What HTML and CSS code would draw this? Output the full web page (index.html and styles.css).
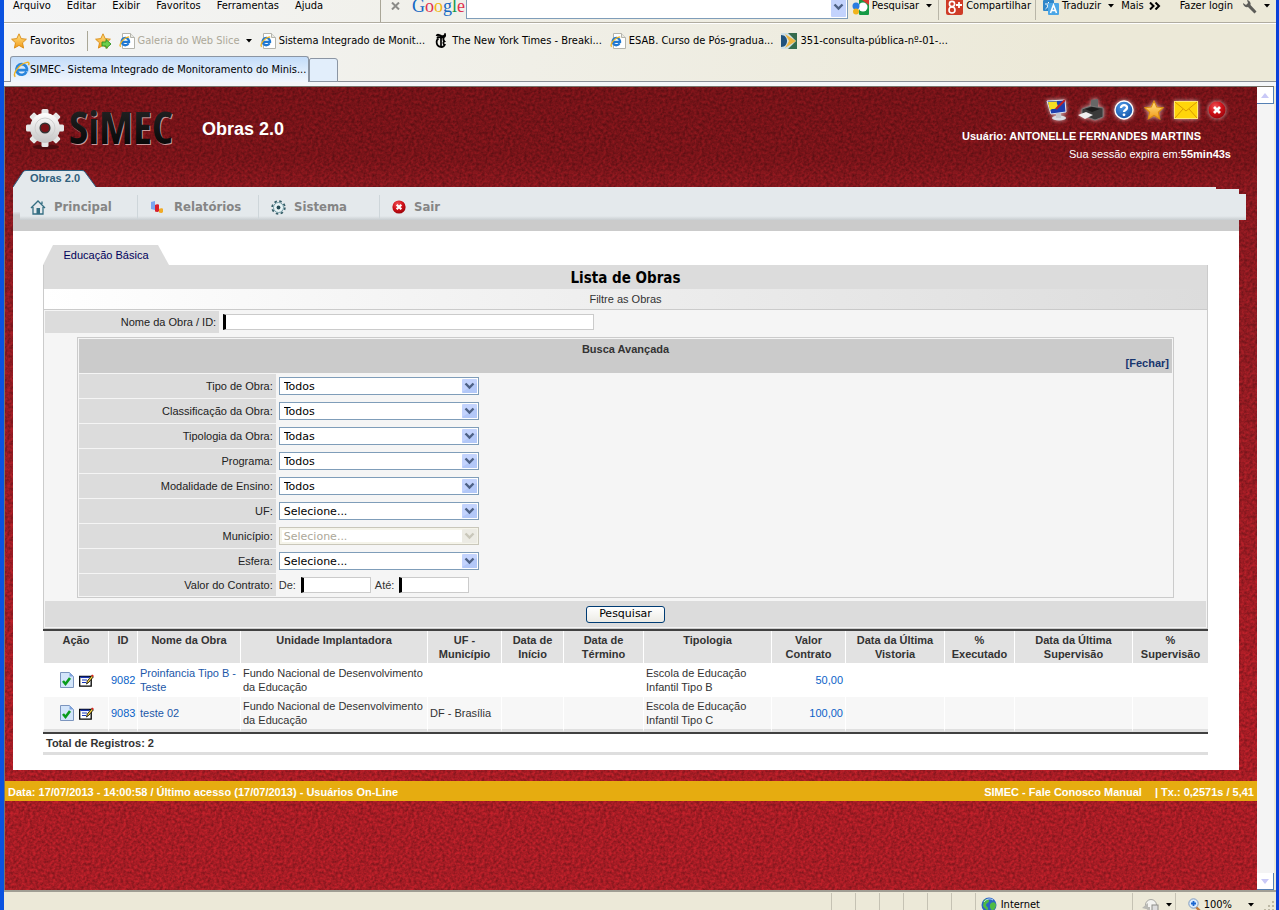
FILE: index.html
```html
<!DOCTYPE html>
<html lang="pt-BR">
<head>
<meta charset="utf-8">
<title>SIMEC - Lista de Obras</title>
<link rel="stylesheet" href="styles.css">
</head>
<body>
<svg class="defs" aria-hidden="true">
  <defs>
    <linearGradient id="gold" x1="0" y1="0" x2="0" y2="1"><stop offset="0" stop-color="#ffe48a"/><stop offset="1" stop-color="#f39a16"/></linearGradient>
    <linearGradient id="metal" x1="0" y1="0" x2="0" y2="1"><stop offset="0" stop-color="#fff"/><stop offset="1" stop-color="#c4c4c4"/></linearGradient>
    <linearGradient id="ink" x1="0" y1="0" x2="0" y2="1"><stop offset="0" stop-color="#2a2a2a"/><stop offset="1" stop-color="#000"/></linearGradient>
    <radialGradient id="redball" cx=".4" cy=".3" r=".8"><stop offset="0" stop-color="#f2545a"/><stop offset=".5" stop-color="#cf1118"/><stop offset="1" stop-color="#8c0007"/></radialGradient>
    <radialGradient id="blueball" cx=".4" cy=".3" r=".8"><stop offset="0" stop-color="#4f9be8"/><stop offset="1" stop-color="#0d4ba0"/></radialGradient>
    <symbol id="star" viewBox="0 0 16 16"><path d="M8 .8l2.2 4.8 5.2.6-3.9 3.6 1.1 5.3L8 12.4l-4.6 2.7 1.1-5.3L.6 6.2l5.2-.6z" fill="url(#gold)" stroke="#d98a12" stroke-width=".9"/></symbol>
    <symbol id="ie" viewBox="0 0 16 16"><path d="M12.6 10.3a5 5 0 1 1 .5-3.200v1.500H4.600" fill="none" stroke="#2a86dd" stroke-width="2.500"/><path d="M2.200 14.800C-.6 12.500 5 3 13.200 1.300c2-.3 2.200 1 1.400 2.700" fill="none" stroke="#f0b323" stroke-width="1.400"/></symbol>
    <symbol id="page" viewBox="0 0 16 16"><path d="M3.500 .5h8l4 4v11h-12z" fill="#fff" stroke="#b4b4ac"/><path d="M11.500 .5v4h4" fill="#e8e8e2" stroke="#b4b4ac"/><path d="M9.600 10.300a3.700 3.700 0 1 1 .4-2.400v1H3.800" fill="none" stroke="#1f78d2" stroke-width="2.300"/><path d="M1.700 13.800C-.5 12 4 4.500 10.200 3.800" fill="none" stroke="#f0b323" stroke-width="1.300"/></symbol>
    <symbol id="caret" viewBox="0 0 6 4"><path d="M0 0h6L3 3.500z" fill="#000"/></symbol>
    <symbol id="chev" viewBox="0 0 15 14"><rect width="15" height="14" rx="1" fill="#c3d3fd"/><path d="M0 13l15-9v10H1z" fill="#b3c8f8"/><path d="M3.500 4.500l4 4 4-4" fill="none" stroke="#4d6185" stroke-width="2.400"/></symbol>
    <symbol id="chev-off" viewBox="0 0 15 14"><rect width="15" height="14" rx="1" fill="#ecebe4"/><path d="M3.500 4.500l4 4 4-4" fill="none" stroke="#c9c7ba" stroke-width="2.400"/></symbol>
    <symbol id="close" viewBox="0 0 18 18"><circle cx="9" cy="9" r="8.500" fill="url(#redball)"/><path d="M6 6l6 6M12 6l-6 6" stroke="#fff" stroke-width="2.800"/></symbol>
    <symbol id="doc-ok" viewBox="0 0 14 16"><path d="M.5 .5h9l4 4v11H.5z" fill="#d3e5fa" stroke="#7c95be"/><path d="M9.500 .5v4h4z" fill="#7fa4dd"/><path d="M3 9l2.500 3L10 6" fill="none" stroke="#0a9c1b" stroke-width="2.600"/></symbol>
    <symbol id="edit" viewBox="0 0 15 13"><path d="M.7 2.500h11.500v9.700H.7z" fill="#fff" stroke="#000" stroke-width="1.300"/><path d="M1.400 3.300h9" stroke="#1836b8" stroke-width="1.500"/><path d="M3 6h5M3 8.500h4" stroke="#1836b8"/><path d="M7.500 10l.8-3 4.500-5.500 1.600 1.300-4.500 5.400z" fill="#f5d142" stroke="#000" stroke-width=".8"/><path d="M12.300 1.800l1-1.300 1.500 1.200-.9 1.200z" fill="#e02020"/></symbol>
  </defs>
</svg>

<div class="window">
  <header class="toolbar">
    <nav class="menu">
      <button>Arquivo</button><button>Editar</button><button>Exibir</button><button>Favoritos</button><button>Ferramentas</button><button>Ajuda</button>
    </nav>
    <button class="bar-close" aria-label="Fechar barra"><svg width="9" height="8" viewBox="0 0 9 8"><path d="M1 .5l7 7M8 .5l-7 7" stroke="#8b8b88" stroke-width="2"/></svg></button>
    <span class="google"><i class="b">G</i><i class="r">o</i><i class="y">o</i><i class="b">g</i><i class="g">l</i><i class="r">e</i></span>
    <div class="search"><input type="text" aria-label="Pesquisa Google"><svg width="15" height="22" viewBox="0 0 15 22"><rect width="15" height="22" rx="1" fill="#c3d3fd"/><path d="M3.500 9.500l4 4 4-4" fill="none" stroke="#4d6185" stroke-width="2.400"/></svg></div>
    <button class="tool t-search"><svg width="17" height="17" viewBox="0 0 17 17"><rect x="7" width="10" height="17" rx="1" fill="#169a45"/><path d="M7 0h10v7z" fill="#d93a2f"/><circle cx="11" cy="9" r="4.500" fill="#fff"/><circle cx="4" cy="8" r="3.500" fill="#2a7de0"/><circle cx="4" cy="13.500" r="3" fill="#f0b41c"/></svg>Pesquisar<svg class="caret"><use href="#caret"/></svg></button>
    <button class="tool t-share"><svg width="17" height="17" viewBox="0 0 17 17"><rect width="17" height="17" rx="2" fill="#cf3b27"/><circle cx="6" cy="6" r="2.600" fill="none" stroke="#fff" stroke-width="1.600"/><circle cx="6" cy="12" r="3" fill="none" stroke="#fff" stroke-width="1.600"/><path d="M10 7h6M13 4v6" stroke="#fff" stroke-width="1.800"/></svg>Compartilhar</button>
    <button class="tool t-trans"><svg width="16" height="17" viewBox="0 0 16 17"><rect width="11" height="11" y="2" rx="1" fill="#2f86c9"/><path d="M2 6h7M5.500 4v2c0 2-1.500 4-3 5M4 7c1 2 2.500 3 4 4" stroke="#fff" fill="none"/><rect x="5" y="5" width="11" height="12" rx="1" fill="#4ba6e6"/><path d="M7.500 15l3-8 3 8M8.500 12.500h4" fill="none" stroke="#fff" stroke-width="1.600"/></svg>Traduzir<svg class="caret"><use href="#caret"/></svg></button>
    <button class="tool t-more">Mais<svg width="12" height="8" viewBox="0 0 12 8"><path d="M1 .5L4.500 4 1 7.500M6.500 .5L10 4 6.500 7.500" fill="none" stroke="#000" stroke-width="2"/></svg></button>
    <button class="tool t-login">Fazer login</button>
    <button class="tool t-wrench" aria-label="Opções"><svg width="15" height="15" viewBox="0 0 15 15"><path d="M1 4a4 4 0 0 0 5 4l6.500 6.500 2-2L8.500 6a4 4 0 0 0-3.500-5l1 3-2 2z" fill="#5c5c58"/></svg><svg class="caret"><use href="#caret"/></svg></button>
  </header>

  <nav class="favorites">
    <button class="fav fav-main"><svg width="16" height="16"><use href="#star"/></svg>Favoritos</button>
    <button class="fav fav-add" aria-label="Adicionar a favoritos"><svg width="16" height="16" viewBox="0 0 16 16"><use href="#star"/><path d="M7 9h4V6.500l5 4.500-5 4.500V13H7z" fill="#6ccf4c" stroke="#2f8f23" stroke-width=".9"/></svg></button>
    <a class="fav fav-off" href="#"><svg width="16" height="16"><use href="#page"/></svg>Galeria do Web Slice<svg class="caret"><use href="#caret"/></svg></a>
    <a class="fav" href="#"><svg width="16" height="16"><use href="#page"/></svg>Sistema Integrado de Monit...</a>
    <a class="fav fav-nyt" href="#"><svg width="16" height="16" viewBox="0 0 16 16"><path d="M3.500 3c1-2.500 3-.5 5 0s3 0 3.500-1.500c.8 3-2 3.500-4.500 3-2-.5-3-.5-3.200.8" fill="none" stroke="#000" stroke-width="1.800"/><path d="M5.500 5.500c-3 2-2.500 7.500 2 8.500 2.500.3 4-1 4.700-3M8 5v8.500M11 5c-1 1-1 2 .5 3.500-1.500.5-1.500 1.500-.5 3" fill="none" stroke="#000" stroke-width="1.700"/></svg>The New York Times - Breaki...</a>
    <a class="fav" href="#"><svg width="16" height="16"><use href="#page"/></svg>ESAB. Curso de Pós-gradua...</a>
    <a class="fav" href="#"><svg width="16" height="16" viewBox="0 0 16 16"><rect width="16" height="16" fill="#356b4d"/><path d="M0 0h7l8 8-8 8H0z" fill="#cfe0e6"/><path d="M0 2c8 0 8 12 0 12z" fill="#20527c"/><path d="M4 1l11 7-11 7 4-7z" fill="#edb541"/></svg>351-consulta-pública-nº-01-...</a>
  </nav>

  <div class="tabs">
    <button class="tab"><svg width="17" height="17"><use href="#ie"/></svg>SIMEC- Sistema Integrado de Monitoramento do Minis...</button>
    <button class="tab-new" aria-label="Nova guia"></button>
  </div>

  <div class="viewport">
    <main class="site">
      <div class="masthead">
        <svg class="logo" width="152" height="46" viewBox="0 0 152 46" role="img" aria-label="SiMEC">
          <ellipse cx="21" cy="39" rx="13" ry="2.500" fill="#4c0b0f"/>
          <g fill="#e6e6e6">
            <rect x="16.500" y="1" width="7" height="38" rx="1.500"/>
            <rect x="16.500" y="1" width="7" height="38" rx="1.500" transform="rotate(45 20 20)"/>
            <rect x="16.500" y="1" width="7" height="38" rx="1.500" transform="rotate(90 20 20)"/>
            <rect x="16.500" y="1" width="7" height="38" rx="1.500" transform="rotate(135 20 20)"/>
          </g>
          <circle cx="20" cy="20" r="15" fill="url(#metal)"/>
          <circle cx="20" cy="20" r="10" fill="none" stroke="#cfcfcf"/>
          <circle cx="20" cy="20" r="4.800" fill="#7a1218" stroke="#333" stroke-width="1.500"/>
          <text class="logo-low" x="45" y="37">SiMEC</text>
          <text class="logo-top" x="44" y="36">SiMEC</text>
        </svg>
        <h1>Obras 2.0</h1>
        <div class="user">
          <div class="quick">
            <button aria-label="Tela"><svg width="22" height="22" viewBox="0 0 22 22"><path d="M1 2l18-1 1 12-15 2z" fill="#1d3fae" stroke="#dce4f4"/><path d="M2 3l9-.5c-1 3 2 3 0 6-3 3-5 0-7 3z" fill="#f6df20"/><path d="M10 10l9-9" stroke="#c32020" stroke-width="2"/><ellipse cx="13" cy="19" rx="7" ry="2.500" fill="#d9dce2"/><path d="M10 14h5v5h-5z" fill="#c5c8cf"/></svg></button>
            <button aria-label="Imprimir"><svg width="26" height="22" viewBox="0 0 26 22"><path d="M13 2q0-1 1-1.300L19 0q1 0 1 1v9h-7z" fill="#676767"/><path d="M4 10l9-3 12 2v9l-8 3-13-5z" fill="#3a3a3a" stroke="#777"/><path d="M7 10l7-2 8 2-8 3z" fill="#1c1c1c"/><path d="M0 16l8-3 7 3-8 4z" fill="#f0f0f0"/></svg></button>
            <button aria-label="Ajuda"><svg width="20" height="20" viewBox="0 0 20 20"><circle cx="10" cy="10" r="9" fill="url(#blueball)" stroke="#fff" stroke-width="1.400"/><path d="M7 8c0-4 6.500-3.500 6 0-.3 2-3 2-3 4" fill="none" stroke="#fff" stroke-width="2.300"/><circle cx="10" cy="14.800" r="1.400" fill="#fff"/></svg></button>
            <button aria-label="Favorito"><svg width="20" height="20"><use href="#star"/></svg></button>
            <button aria-label="Mensagens"><svg width="24" height="18" viewBox="0 0 24 18"><rect x=".5" y=".5" width="23" height="17" fill="#ffd50a" stroke="#ffea70"/><path d="M1 1l11 9L23 1M1 17l8-9M23 17l-8-9" fill="none" stroke="#d99a00"/></svg></button>
            <button aria-label="Sair do sistema"><svg width="18" height="18"><use href="#close"/></svg></button>
          </div>
          <p class="who">Usuário: ANTONELLE FERNANDES MARTINS</p>
          <p class="session">Sua sessão expira em:<b>55min43s</b></p>
        </div>
      </div>

      <div class="sheet">
        <a class="module-tab" href="#"><svg viewBox="0 0 84 17" preserveAspectRatio="none"><path d="M0 17L10 2q1-1.500 3-1.500h56q2 0 3 1.500l11 15" fill="#e4e9ec" stroke="#2b5f80"/></svg><span>Obras 2.0</span></a>
        <nav class="mainmenu">
          <a href="#"><svg width="16" height="15" viewBox="0 0 16 15"><path d="M1 8l7-7 7 7M3 7v7h10V7M12 4V1.500" fill="none" stroke="#346e82" stroke-width="1.300"/><rect x="6.500" y="8" width="3.500" height="6" fill="#346e82"/></svg>Principal</a>
          <a href="#"><svg width="16" height="13" viewBox="0 0 16 13"><path d="M1 1l4-1v9l-4-1z" fill="#7ba5ee"/><path d="M5 4c1-1 4-1 4 0v6c-1 1.500-4 1-4 0z" fill="#d81f2a"/><path d="M9 8c1-1 4-1 4 0v3c-1 1.500-4 1-4 0z" fill="#f0ab25"/></svg>Relatórios</a>
          <a href="#"><svg width="15" height="15" viewBox="0 0 15 15"><circle cx="7.500" cy="7.500" r="6.300" fill="none" stroke="#38606a" stroke-width="1.800" stroke-dasharray="2.500 2.450"/><circle cx="7.500" cy="7.500" r="5" fill="#e8f3f5" stroke="#729ba5"/><circle cx="7.500" cy="7.500" r="1.900" fill="#244c56"/></svg>Sistema</a>
          <a href="#"><svg width="14" height="14"><use href="#close"/></svg>Sair</a>
        </nav>
        <div class="graybar"></div>

        <div class="content">
          <a class="page-tab" href="#">Educação Básica</a>
          <form class="filters">
            <h2>Lista de Obras</h2>
            <p class="subtitle">Filtre as Obras</p>
            <div class="name-row">
              <label for="nome">Nome da Obra / ID:</label>
              <div><input id="nome" class="field wide" type="text"></div>
            </div>
            <div class="advanced">
              <div class="adv-head"><strong>Busca Avançada</strong><a href="#">[Fechar]</a></div>
              <div class="row"><label for="tipo">Tipo de Obra:</label><div><span class="pick"><select id="tipo"><option>Todos</option></select><svg><use href="#chev"/></svg></span></div></div>
              <div class="row"><label for="classe">Classificação da Obra:</label><div><span class="pick"><select id="classe"><option>Todos</option></select><svg><use href="#chev"/></svg></span></div></div>
              <div class="row"><label for="tipologia">Tipologia da Obra:</label><div><span class="pick"><select id="tipologia"><option>Todas</option></select><svg><use href="#chev"/></svg></span></div></div>
              <div class="row"><label for="programa">Programa:</label><div><span class="pick"><select id="programa"><option>Todos</option></select><svg><use href="#chev"/></svg></span></div></div>
              <div class="row"><label for="modalidade">Modalidade de Ensino:</label><div><span class="pick"><select id="modalidade"><option>Todos</option></select><svg><use href="#chev"/></svg></span></div></div>
              <div class="row"><label for="uf">UF:</label><div><span class="pick"><select id="uf"><option>Selecione...</option></select><svg><use href="#chev"/></svg></span></div></div>
              <div class="row"><label for="municipio">Município:</label><div><span class="pick"><select id="municipio" disabled><option>Selecione...</option></select><svg><use href="#chev-off"/></svg></span></div></div>
              <div class="row"><label for="esfera">Esfera:</label><div><span class="pick"><select id="esfera"><option>Selecione...</option></select><svg><use href="#chev"/></svg></span></div></div>
              <div class="row last"><span class="label">Valor do Contrato:</span><div><label for="de">De:</label><input id="de" class="field short" type="text"><label for="ate">Até:</label><input id="ate" class="field short" type="text"></div></div>
            </div>
            <div class="actions"><button type="button" class="go">Pesquisar</button></div>
          </form>

          <table class="works">
            <colgroup><col class="c-act"><col class="c-id"><col class="c-name"><col class="c-unit"><col class="c-uf"><col class="c-start"><col class="c-end"><col class="c-type"><col class="c-val"><col class="c-visit"><col class="c-exec"><col class="c-sup"><col class="c-psup"></colgroup>
            <thead><tr><th>Ação</th><th>ID</th><th>Nome da Obra</th><th>Unidade Implantadora</th><th>UF -<br>Município</th><th>Data de<br>Início</th><th>Data de<br>Término</th><th>Tipologia</th><th>Valor<br>Contrato</th><th>Data da Última<br>Vistoria</th><th>%<br>Executado</th><th>Data da Última<br>Supervisão</th><th>%<br>Supervisão</th></tr></thead>
            <tbody>
              <tr><td class="acts"><button aria-label="Selecionar 9082"><svg width="14" height="16"><use href="#doc-ok"/></svg></button><button aria-label="Editar 9082"><svg width="15" height="13"><use href="#edit"/></svg></button></td><td class="num">9082</td><td><a href="#">Proinfancia Tipo B - Teste</a></td><td>Fundo Nacional de Desenvolvimento da Educação</td><td></td><td></td><td></td><td>Escola de Educação<br>Infantil Tipo B</td><td class="num">50,00</td><td></td><td></td><td></td><td></td></tr>
              <tr><td class="acts"><button aria-label="Selecionar 9083"><svg width="14" height="16"><use href="#doc-ok"/></svg></button><button aria-label="Editar 9083"><svg width="15" height="13"><use href="#edit"/></svg></button></td><td class="num">9083</td><td><a href="#">teste 02</a></td><td>Fundo Nacional de Desenvolvimento da Educação</td><td>DF - Brasília</td><td></td><td></td><td>Escola de Educação<br>Infantil Tipo C</td><td class="num">100,00</td><td></td><td></td><td></td><td></td></tr>
            </tbody>
          </table>
          <p class="total">Total de Registros: 2</p>
        </div>
      </div>

      <footer class="sitefoot"><span>Data: 17/07/2013 - 14:00:58 / Último acesso (17/07/2013) - Usuários On-Line</span><span class="contact">SIMEC - Fale Conosco Manual</span><span>| Tx.: 0,2571s / 5,41</span></footer>
    </main>
    <div class="scroll">
      <button aria-label="Rolar para cima"><svg width="8" height="5" viewBox="0 0 8 5"><path d="M0 5h8L4 0z" fill="#c9c9f7"/></svg></button>
      <button aria-label="Rolar para baixo"><svg width="8" height="5" viewBox="0 0 8 5"><path d="M0 0h8L4 5z" fill="#c9c9f7"/></svg></button>
    </div>
  </div>

  <div class="status">
    <span class="slot"></span><span class="slot"></span><span class="slot"></span><span class="slot"></span><span class="slot"></span><span class="slot"></span>
    <span class="zone"><svg width="16" height="16" viewBox="0 0 16 16"><circle cx="8" cy="8" r="7.500" fill="#2c66c4"/><path d="M3 3c3-2 5-1 5 1S5 6 5 8s2 1 2 4-4-1-5-3zM10 6c3-2 5 0 5 2s-2 6-4 5-3-5-1-7z" fill="#4fbb45"/><path d="M3 5c2-3 6-4 9-2" stroke="#bcdcff" fill="none"/></svg>Internet</span>
    <button class="guard" aria-label="Segurança"><svg width="17" height="15" viewBox="0 0 17 15"><circle cx="9" cy="7" r="5.500" fill="#f3f3f0" stroke="#a8a8a2"/><path d="M0 10l6-5v4h2v3z" fill="#b9b9b4"/><rect x="10" y="7" width="6" height="6" fill="#ddd" stroke="#8d8d88"/></svg><svg class="caret"><use href="#caret"/></svg></button>
    <button class="zoom"><svg width="13" height="14" viewBox="0 0 13 14"><path d="M8 9l4 4" stroke="#c47b3a" stroke-width="2.400"/><circle cx="5.500" cy="5.500" r="4.700" fill="#dcebfb" stroke="#7f9cc0"/><path d="M3 5.500h5M5.500 3v5" stroke="#1a66d0" stroke-width="1.800"/></svg>100%<svg class="caret"><use href="#caret"/></svg></button>
    <svg class="grip" width="12" height="12" viewBox="0 0 12 12"><path d="M9 2h2v2H9zM5 6h2v2H5zM9 6h2v2H9zM1 10h2v2H1zM5 10h2v2H5zM9 10h2v2H9z" fill="#bdb9a4"/></svg>
  </div>
</div>
</body>
</html>
```

FILE: styles.css
```css
* { box-sizing: border-box; }
body, h1, h2, p { margin: 0; }
button { border: 0; padding: 0; margin: 0; background: none; font: inherit; color: inherit; white-space: nowrap; }
a { color: inherit; text-decoration: none; }
svg { display: block; flex: none; }
.defs { position: absolute; width: 0; height: 0; }
.caret { width: 6px; height: 4px; }

.window {
  height: 100vh;
  overflow: hidden;
  display: flex;
  flex-direction: column;
  border-left: 4px solid #0a52e0;
  border-right: 3px solid #0a3fd8;
  background: linear-gradient(100deg, #f4f5f6, #ece9d8 75%);
  font: 11px/14px "DejaVu Sans Condensed", "DejaVu Sans", sans-serif;
  font-stretch: condensed;
  color: #000;
}

/* Browser toolbars */
.toolbar { display: flex; align-items: center; height: 33px; margin-top: -10px; flex: none; border-bottom: 1px solid #b0aca0; }
.menu { display: flex; gap: 16px; width: 377px; padding-left: 9px; height: 31px; align-items: center; border-right: 1px solid #a9a697; }
.bar-close { margin: 0 12px 0 10px; }
.google { width: 54px; font: 18px/20px "Liberation Serif", serif; }
.google i { font-style: normal; }
.google .b { color: #1468c4; }
.google .r { color: #e0304f; }
.google .y { color: #f2b50f; }
.google .g { color: #12994a; }
.search { flex: 1; height: 26px; display: flex; align-items: center; border: 1px solid #7f9db9; background: #fff; padding-right: 1px; }
.search input { flex: 1; min-width: 0; border: 0; height: 20px; background: transparent; outline: 0; }
.tool { display: flex; align-items: center; gap: 3px; height: 28px; }
.tool .caret { margin-left: 4px; }
.t-search { margin-left: 4px; padding-right: 6px; border-right: 1px solid #b9b6a8; }
.t-share { margin-left: 7px; padding-right: 4px; border-right: 1px solid #b9b6a8; }
.t-trans { margin-left: 7px; }
.t-more { margin-left: 7px; gap: 5px; }
.t-login { margin-left: 19px; }
.t-wrench { margin: 0 6px 0 9px; }

.favorites { display: flex; align-items: center; height: 33px; flex: none; border-top: 1px solid #fff; padding: 1px 0 0 7px; }
.fav { display: flex; align-items: center; gap: 3px; margin-right: 8px; white-space: nowrap; }
.fav-main { height: 20px; padding-right: 12px; margin-right: 7px; border-right: 1px solid #aaa797; }
.fav-off { color: #aca899; }
.fav-off .caret { margin-left: 3px; }

.tabs { display: flex; align-items: flex-end; height: 30px; flex: none; padding-left: 6px; border-bottom: 4px solid #f4f6f8; background: linear-gradient(#8a8f96, #8a8f96) bottom / 100% 1px no-repeat; }
.tab { height: 26px; width: 299px; display: flex; align-items: center; padding-left: 2px; border: 1px solid #8b95a3; border-bottom: 0; border-radius: 3px 3px 0 0; background: linear-gradient(#c3dcf9, #f2f7fd); }
.tab-new { width: 29px; height: 24px; border: 1px solid #8b95a3; border-radius: 2px 3px 0 0; background: #e2eefb; }

/* Page area */
.viewport { flex: 1; min-height: 0; display: flex; border: solid #77756c; border-width: 1px 0 0 1px; margin-right: 2px; }
.site {
  flex: 1;
  min-width: 0;
  font: 11px/14px "Liberation Sans", Arial, sans-serif;
  color: #333;
  background:
    url("data:image/svg+xml,%3Csvg xmlns='http://www.w3.org/2000/svg' width='96' height='96'%3E%3Cfilter id='n' x='0' y='0' width='1' height='1'%3E%3CfeTurbulence type='fractalNoise' baseFrequency='.35' numOctaves='2' stitchTiles='stitch'/%3E%3CfeColorMatrix values='0 0 0 0 0 0 0 0 0 0 0 0 0 0 0 .6 0 0 0 -.15'/%3E%3C/filter%3E%3Crect width='96' height='96' filter='url(%23n)'/%3E%3C/svg%3E"),
    linear-gradient(#89161c 0, #8d171d 70px, #a01c24 110px, #a91f27 260px, #c3212b 600px, #c3212b 100%);
}
.masthead { display: flex; height: 83px; padding: 21px 26px 0 20px; align-items: flex-start; }
.logo-low, .logo-top { font: bold 44px "Open Sans", sans-serif; font-stretch: condensed; }
.logo-low { fill: #c9989a; }
.logo-top { fill: url(#ink); }
.masthead h1 { margin: 10px 0 0 25px; font-size: 18px; line-height: 22px; color: #fff; }
.user { margin: -11px 0 0 auto; color: #fff; display: grid; justify-items: end; }
.quick { display: flex; align-items: center; gap: 10px; height: 25px; padding-right: 5px; }
.quick button { filter: drop-shadow(0 0 2px rgba(255,255,255,.7)); }
.who { font-weight: bold; margin: 7px 30px 4px 0; }

.sheet { margin: 0 18px 0 8px; }
.module-tab { display: grid; width: 84px; height: 17px; font: bold 11px/16px "Liberation Sans", Arial, sans-serif; color: #2f5f7d; text-align: center; }
.module-tab > * { grid-area: 1 / 1; }
.module-tab svg { width: 100%; height: 17px; }
.mainmenu {
  display: flex;
  align-items: center;
  height: 33px;
  margin-right: -7px;
  padding: 7px 0 0 6px;
  background:
    linear-gradient(#dfe3e6, #cbcbcb 3px) left bottom / 7px 8px no-repeat,
    linear-gradient(#e4e9ec 29px, #c8cdd0);
  clip-path: polygon(0 0, calc(100% - 30px) 0, calc(100% - 30px) 2px, calc(100% - 7px) 2px, calc(100% - 7px) 7px, 100% 7px, 100% 100%, 0 100%);
}
.mainmenu a { display: flex; align-items: center; gap: 8px; width: 121px; height: 24px; padding-left: 12px; font: bold 13px/16px "DejaVu Sans", Verdana, sans-serif; font-stretch: condensed; color: #858585; }
.mainmenu a:first-child { width: 118px; padding-left: 11px; }
.mainmenu a + a { border-left: 1px solid #ced6da; }
.graybar { height: 11px; background: #cbcbcb; }
.content { background: #fff; padding: 14px 31px 15px 30px; }

.page-tab { display: block; width: 126px; height: 20px; line-height: 20px; text-align: center; color: #00005a; background: #dcdcdc; clip-path: polygon(10px 0, 115px 0, 100% 100%, 0 100%); }
.filters { border: solid #cbcbcb; border-width: 0 1px 1px; background: #f5f5f5; }
.filters h2 { background: #dcdcdc; height: 24px; text-align: center; font: bold 15px/26px "DejaVu Sans Condensed", "DejaVu Sans", sans-serif; font-stretch: condensed; color: #000; }
.subtitle { height: 21px; line-height: 20px; text-align: center; background: linear-gradient(90deg, #fff, #dcdcdc); border-bottom: 1px solid #cbcbcb; }
.name-row { display: grid; grid-template-columns: 15% 1fr; margin: 1px 1px 4px; height: 22px; }
.name-row > div, .row > div { display: flex; align-items: center; padding-left: 4px; }
.row > div { padding-left: 3px; }
.name-row label, .row > label, .label { background: #dcdcdc; color: #222; text-align: right; padding-right: 3px; align-content: center; }
.field { height: 16px; padding: 0 2px; border: 1px solid #cbcbcb; border-left: 3px solid #000; background: #fff; font: inherit; outline: 0; border-radius: 0; }
.wide { width: 371px; }
.short { width: 70px; margin: 0 4px 0 5px; }

.advanced { margin: 0 33px 3px; border: 1px solid #cbcbcb; padding: 1px; }
.adv-head { display: flex; flex-direction: column; background: #cbcbcb; padding: 3px; font-weight: bold; margin-bottom: 1px; text-align: center; }
.adv-head a { align-self: flex-end; color: #17356e; }
.row { display: grid; grid-template-columns: 18% 1fr; height: 24px; margin-bottom: 1px; }
.row.last { height: 22px; margin-bottom: 0; }
.pick { display: inline-grid; width: 200px; align-items: center; }
.pick > * { grid-area: 1 / 1; }
.pick svg { width: 15px; height: 14px; justify-self: end; margin-right: 2px; pointer-events: none; }
.pick select { appearance: none; width: 100%; height: 18px; margin: 0; padding: 1px 20px 0 4px; border: 1px solid #7f9db9; border-radius: 0; background: #fff; color: #000; font: 11px/14px "DejaVu Sans", Verdana, sans-serif; }
.pick select:disabled { color: #aca899; border-color: #c9c7ba; box-shadow: inset 0 0 0 2px #f5f4ea; opacity: 1; }
.actions { margin: 0 1px 1px; height: 26px; display: grid; place-items: center; background: #dcdcdc; }
.go { width: 79px; height: 17px; border: 1px solid #003c74; border-radius: 3px; background: linear-gradient(#fff, #ecebe5); font: 11px/14px "DejaVu Sans", Verdana, sans-serif; color: #000; }

/* Results */
.works { width: 100%; table-layout: fixed; border-collapse: separate; border-spacing: 0; border-top: 2px solid #404040; }
.works th { background: #e2e2e2; height: 32px; padding: 2px 0; vertical-align: top; border-left: 1px solid #fff; color: #333; }
.works td { height: 34px; padding: 2px; border-left: 1px solid #fff; }
.works tbody tr:last-child td { height: 35px; background: #f7f7f7; border-bottom: 3px solid #e0e0e0; }
.works a { color: #1c57a8; }
.works .num { color: #0a62c8; text-align: right; }
.acts button { vertical-align: middle; }
.works .acts { padding-left: 16px; }
.acts button + button { margin-left: 5px; }
.c-act { width: 65px; } .c-id { width: 29px; } .c-name { width: 103px; } .c-unit { width: 187px; }
.c-uf { width: 74px; } .c-start { width: 62px; } .c-end { width: 80px; } .c-type { width: 128px; }
.c-val { width: 74px; } .c-visit { width: 99px; } .c-exec { width: 70px; } .c-sup { width: 118px; } .c-psup { width: 76px; }
.total { font-weight: bold; padding: 2px 3px; height: 23px; border-top: 2px solid #404040; border-bottom: 3px solid #dedede; }

.sitefoot { display: flex; margin-top: 11px; height: 20px; line-height: 22px; padding: 0 3px; background: #e6ac10; color: #fff; font-weight: bold; }
.contact { margin: 0 13px 0 auto; }

.scroll { width: 17px; flex: none; display: flex; flex-direction: column; justify-content: space-between; background: #f4f4f4; }
.scroll button { height: 17px; display: grid; place-items: center; background: #fff; border: solid #5580b4; border-width: 0 1px 1px 0; }

/* Status bar */
.status { display: flex; align-items: center; height: 20px; flex: none; border-top: 2px solid #a09e94; padding-top: 8px; background: #ece9d8; }
.slot { width: 24px; height: 24px; border-left: 1px solid #c5c2b3; }
.slot:first-child { margin-left: auto; }
.zone { display: flex; align-items: center; gap: 4px; width: 157px; height: 24px; padding-left: 5px; border-left: 1px solid #c5c2b3; }
.guard, .zoom { display: flex; align-items: center; height: 24px; border-left: 1px solid #c5c2b3; }
.guard { width: 43px; padding-left: 9px; gap: 7px; }
.zoom { padding-left: 12px; gap: 3px; }
.zoom .caret { margin-left: 13px; }
.grip { margin: 0 1px 0 9px; }
```
